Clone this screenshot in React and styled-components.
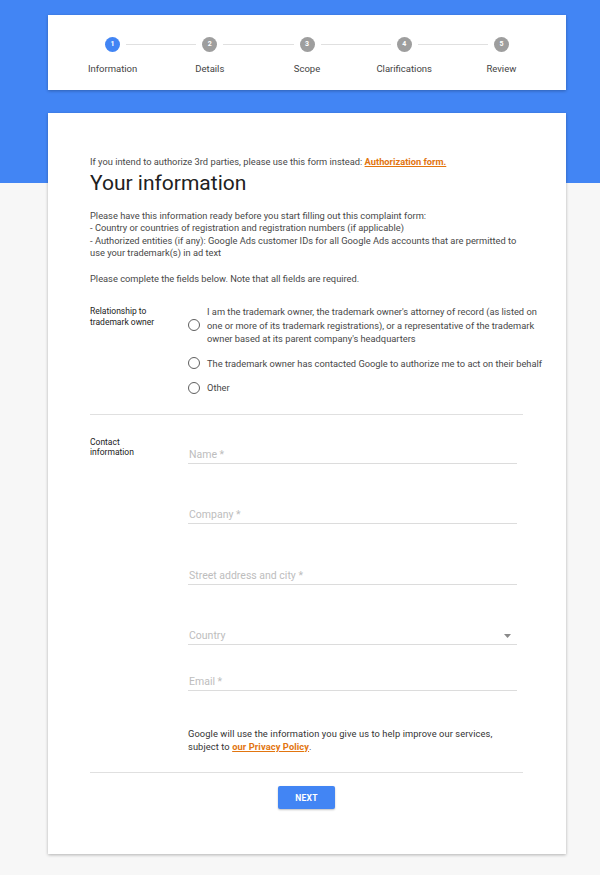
import React from 'react';
import styled, { createGlobalStyle } from 'styled-components';

const GlobalStyle = createGlobalStyle`
    body {
        margin: 0;
        font-family: Roboto, "Liberation Sans", Arial, sans-serif;
        background: linear-gradient(#4285f4 0, #4285f4 183px, #f7f7f7 183px);
        min-height: 875px;
    }
`

const Page = styled.div`
    width: 518px;
    margin-left: 48px;
    padding: 15px 0 20px;
    display: flex;
    flex-direction: column;
    gap: 23px;
`

const Card = styled.section`
    background: #fff;
    box-shadow: 0 1px 3px rgba(0, 0, 0, 0.28);
`

const Stepper = styled(Card)`
    height: 75px;
    box-sizing: border-box;
    padding: 21px 16px 0;
    display: grid;
    grid-template-columns: repeat(5, 1fr);
`

const Step = styled.div`
    display: flex;
    flex-direction: column;
    align-items: center;
`

const StepTrack = styled.div`
    width: 100%;
    display: flex;
    align-items: center;
    height: 16px;
`

const Segment = styled.div`
    flex: 1;
    height: 1px;
    background: ${p => (p.$hidden ? 'transparent' : '#e0e0e0')};
    margin: ${p => (p.$side === 'left' ? '0 6px 0 0' : '0 0 0 6px')};
`

const Dot = styled.div`
    width: 15px;
    height: 15px;
    border-radius: 50%;
    background: ${p => (p.$active ? '#4285f4' : '#9e9e9e')};
    color: #fff;
    font-size: 7px;
    font-weight: 700;
    display: flex;
    align-items: center;
    justify-content: center;
`

const StepLabel = styled.div`
    margin-top: 11px;
    font-size: 9.5px;
    color: #444;
`

const Main = styled(Card)`
    padding: 43px 43px 45px 42px;
    color: #333;
`

const Note = styled.p`
    margin: 0;
    font-size: 9.3px;
    line-height: 12.5px;
    color: #484848;
`

const Link = styled.a`
    color: #e2750f;
    font-weight: 700;
    text-decoration: underline;
`

const Heading = styled.h1`
    margin: 2px 0 0;
    font-size: 21px;
    line-height: 24px;
    font-weight: 400;
    color: #212121;
`

const Body = styled(Note)`
    margin-top: ${p => p.$top || 0}px;
`

const Section = styled.div`
    display: grid;
    grid-template-columns: 98px 1fr;
    align-items: start;
    margin-top: ${p => p.$top || 0}px;
`

const SideLabel = styled.div`
    font-size: 8.5px;
    line-height: 10.5px;
    color: #222;
    padding-top: ${p => p.$pad || 0}px;
`

const Options = styled.div`
    display: flex;
    flex-direction: column;
    gap: 11px;
`

const Option = styled.label`
    display: flex;
    align-items: center;
    gap: 7px;
    width: 360px;
`

const Radio = styled.span`
    flex: none;
    width: 10px;
    height: 10px;
    border: 1.3px solid #5f5f5f;
    border-radius: 50%;
`

const OptionText = styled.span`
    font-size: 9.3px;
    line-height: 13.5px;
    color: #484848;
`

const Divider = styled.hr`
    border: none;
    border-top: 1px solid #e0e0e0;
    margin: ${p => p.$top}px 0 0;
`

const Fields = styled.div`
    display: flex;
    flex-direction: column;
    padding-right: 6px;
`

const Field = styled.div`
    margin-top: ${p => p.$top}px;
    display: flex;
    align-items: center;
    justify-content: space-between;
    padding: 0 6px 1px 1px;
    border-bottom: 1px solid #dcdcdc;
`

const Placeholder = styled.span`
    font-size: 10.5px;
    line-height: 14px;
    color: #bdbdbd;
`

const Privacy = styled.p`
    margin: 36px 0 0;
    max-width: 312px;
    font-size: 9.3px;
    line-height: 13px;
    letter-spacing: 0.1px;
    color: #333;
`

const Actions = styled.div`
    display: flex;
    justify-content: center;
    margin-top: 13px;
`

const NextButton = styled.button`
    width: 57px;
    height: 23px;
    border: none;
    border-radius: 2px;
    background: #4285f4;
    color: #fff;
    font-family: inherit;
    font-size: 8.5px;
    font-weight: 700;
    letter-spacing: 0.3px;
    box-shadow: 0 1px 2px rgba(0, 0, 0, 0.25);
`

const steps = ['Information', 'Details', 'Scope', 'Clarifications', 'Review'];

const options = [
    "I am the trademark owner, the trademark owner's attorney of record (as listed on one or more of its trademark registrations), or a representative of the trademark owner based at its parent company's headquarters",
    'The trademark owner has contacted Google to authorize me to act on their behalf',
    'Other',
];

const fields = [
    { label: 'Name *', top: 11 },
    { label: 'Company *', top: 44.5 },
    { label: 'Street address and city *', top: 44.5 },
    { label: 'Country', top: 44.5, select: true },
    { label: 'Email *', top: 30 },
];

function Caret() {
    return (
        <svg width="7" height="4" viewBox="0 0 7 4">
            <path d="M0 0h7L3.5 4z" fill="#8a8a8a" />
        </svg>
    );
}

function App() {
    return (
        <>
            <GlobalStyle />
            <Page>
                <Stepper>
                    {steps.map((s, i) => (
                        <Step key={s}>
                            <StepTrack>
                                <Segment $side="left" $hidden={i === 0} />
                                <Dot $active={i === 0}>{i + 1}</Dot>
                                <Segment $side="right" $hidden={i === steps.length - 1} />
                            </StepTrack>
                            <StepLabel>{s}</StepLabel>
                        </Step>
                    ))}
                </Stepper>
                <Main>
                    <Note>
                        If you intend to authorize 3rd parties, please use this form instead:{' '}
                        <Link>Authorization form.</Link>
                    </Note>
                    <Heading>Your information</Heading>
                    <Body $top={15}>
                        Please have this information ready before you start filling out this complaint form:<br />
                        - Country or countries of registration and registration numbers (if applicable)<br />
                        - Authorized entities (if any): Google Ads customer IDs for all Google Ads accounts that are permitted to use your trademark(s) in ad text
                    </Body>
                    <Body $top={13}>Please complete the fields below. Note that all fields are required.</Body>

                    <Section $top={20}>
                        <SideLabel $pad={1}>Relationship to<br />trademark owner</SideLabel>
                        <Options>
                            {options.map(o => (
                                <Option key={o}>
                                    <Radio />
                                    <OptionText>{o}</OptionText>
                                </Option>
                            ))}
                        </Options>
                    </Section>
                    <Divider $top={19} />

                    <Section $top={22}>
                        <SideLabel>Contact<br />information</SideLabel>
                        <Fields>
                            {fields.map(f => (
                                <Field key={f.label} $top={f.top}>
                                    <Placeholder>{f.label}</Placeholder>
                                    {f.select && <Caret />}
                                </Field>
                            ))}
                            <Privacy>
                                Google will use the information you give us to help improve our services,
                                subject to <Link>our Privacy Policy</Link>.
                            </Privacy>
                        </Fields>
                    </Section>
                    <Divider $top={19} />
                    <Actions>
                        <NextButton>NEXT</NextButton>
                    </Actions>
                </Main>
            </Page>
        </>
    );
}

export default App;
